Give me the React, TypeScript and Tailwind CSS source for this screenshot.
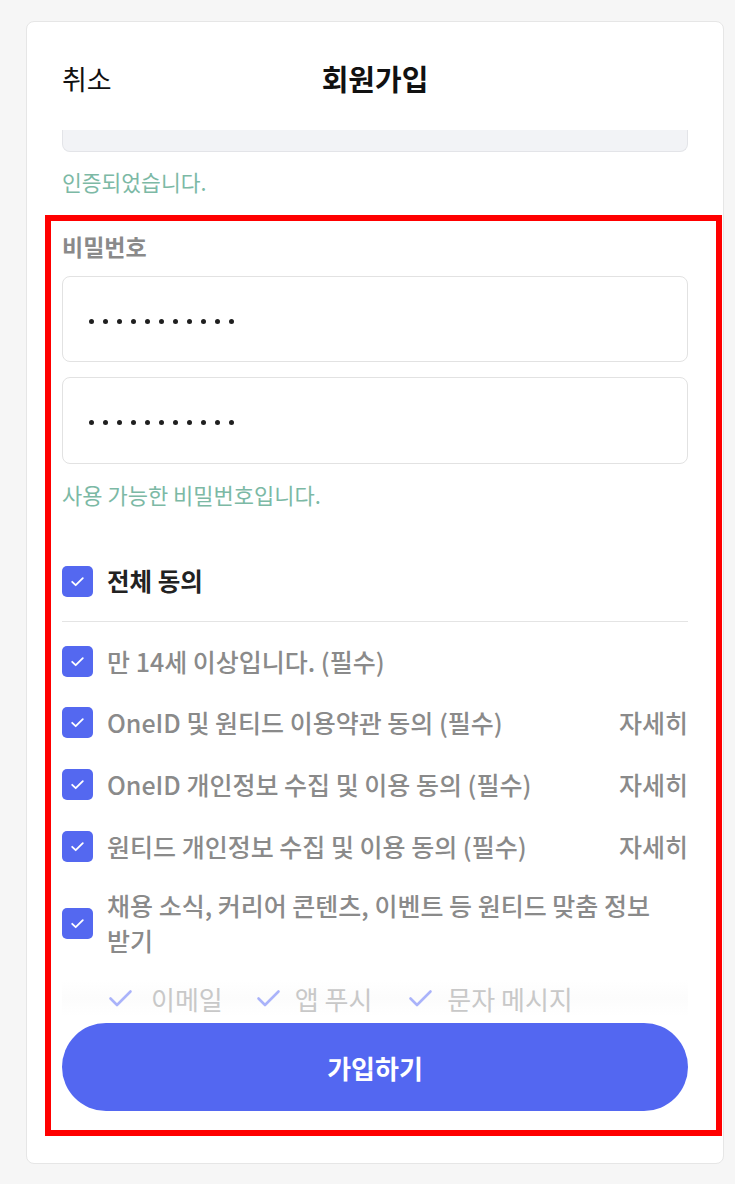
import React from "react";

const font = { fontFamily: '"Noto Sans CJK KR", "Noto Sans", sans-serif' };

function Box() {
  return (
    <div className="w-[31px] h-[31px] shrink-0 rounded-[5px] bg-[#5468f0] flex items-center justify-center">
      <svg width="17" height="17" viewBox="0 0 16 16" fill="none">
        <path d="M3 8.3l3.3 3.2L13 4.8" stroke="white" strokeWidth="1.7" strokeLinecap="round" strokeLinejoin="round" />
      </svg>
    </div>
  );
}

function SubCheck() {
  return (
    <svg width="25" height="20" viewBox="0 0 25 20" fill="none">
      <path d="M2.5 10.5l6.5 6.5L22.5 3.5" stroke="#aab3fa" strokeWidth="2.6" strokeLinecap="round" strokeLinejoin="round" />
    </svg>
  );
}

function Row({ text, detail, className }: { text: string; detail?: boolean; className?: string }) {
  return (
    <div className={"flex items-center h-[35px] " + (className || "")}>
      <Box />
      <span className="ml-[14px] text-[25px] leading-[35px] text-[#8a8a8a] font-medium flex-1 whitespace-nowrap">{text}</span>
      {detail && <span className="text-[25px] leading-[35px] text-[#8a8a8a] font-medium">자세히</span>}
    </div>
  );
}

function Dots() {
  return (
    <div className="flex items-center gap-[9px] pt-[4px]">
      {Array.from({ length: 11 }).map((_, i) => (
        <span key={i} className="block w-[5px] h-[5px] rounded-full bg-[#1f1f1f]" />
      ))}
    </div>
  );
}

export default function App() {
  return (
    <div className="min-h-[1184px] bg-[#f6f6f6] pt-[21px] relative" style={font}>
      <div className="ml-[26px] w-[698px] h-[1143px] bg-white border border-[#e6e6e6] rounded-[8px] overflow-hidden">
        <div className="h-[108px] px-[35px] pt-[37px] relative">
          <div className="flex items-center h-[40px]">
            <span className="text-[27px] text-[#111]">취소</span>
          </div>
          <div className="absolute left-0 right-0 top-[37px] h-[40px] flex justify-center items-center">
            <span className="text-[29px] font-bold text-[#111]">회원가입</span>
          </div>
        </div>
        <div className="px-[35px]">
          <div className="h-[22px] bg-[#f2f3f6] border-x border-b border-[#e3e4e8] rounded-b-[8px]" />
          <div className="mt-[16px] text-[21.5px] leading-[28px] text-[#7cb9a5]">인증되었습니다.</div>
          <div className="mt-[35px] text-[23px] leading-[30px] font-bold text-[#8a8a8a]">비밀번호</div>
          <div className="mt-[15px] h-[86px] border border-[#e2e2e2] rounded-[8px] flex items-center pl-[26px]">
            <Dots />
          </div>
          <div className="mt-[15px] h-[87px] border border-[#e2e2e2] rounded-[8px] flex items-center pl-[26px]">
            <Dots />
          </div>
          <div className="mt-[16px] text-[22px] leading-[28px] text-[#7cb9a5]">사용 가능한 비밀번호입니다.</div>

          <div className="mt-[58px] flex items-center h-[31px]">
            <Box />
            <span className="ml-[14px] text-[24.5px] font-bold text-[#222]">전체 동의</span>
          </div>
          <div className="mt-[24px] h-px bg-[#e4e4e4]" />

          <Row className="mt-[22px]" text="만 14세 이상입니다. (필수)" />
          <Row className="mt-[26px]" text="OneID 및 원티드 이용약관 동의 (필수)" detail />
          <Row className="mt-[27px]" text="OneID 개인정보 수집 및 이용 동의 (필수)" detail />
          <Row className="mt-[27px]" text="원티드 개인정보 수집 및 이용 동의 (필수)" detail />

          <div className="mt-[24px] flex items-center">
            <Box />
            <span className="ml-[14px] text-[25px] leading-[35px] text-[#8a8a8a] font-medium pr-[20px]">
              채용 소식, 커리어 콘텐츠, 이벤트 등 원티드 맞춤 정보 받기
            </span>
          </div>

          <div className="mt-[22px] h-[36px] flex items-center pl-[46px] bg-gradient-to-b from-white via-[#fcfcfc] to-white">
            <SubCheck />
            <span className="ml-[18px] text-[26px] text-[#c8c8c8]">이메일</span>
            <span className="ml-[33px]"><SubCheck /></span>
            <span className="ml-[14px] text-[26px] text-[#c8c8c8]">앱 푸시</span>
            <span className="ml-[36px]"><SubCheck /></span>
            <span className="ml-[14px] text-[26px] text-[#c8c8c8]">문자 메시지</span>
          </div>

          <button className="mt-[7px] w-full h-[88px] rounded-full bg-[#5367f1] flex items-center justify-center">
            <span className="text-[26px] font-bold text-white">가입하기</span>
          </button>
        </div>
      </div>
      <div className="absolute left-[45px] top-[215px] w-[677px] h-[921px] border-[6px] border-[#ff0000] pointer-events-none" />
    </div>
  );
}
